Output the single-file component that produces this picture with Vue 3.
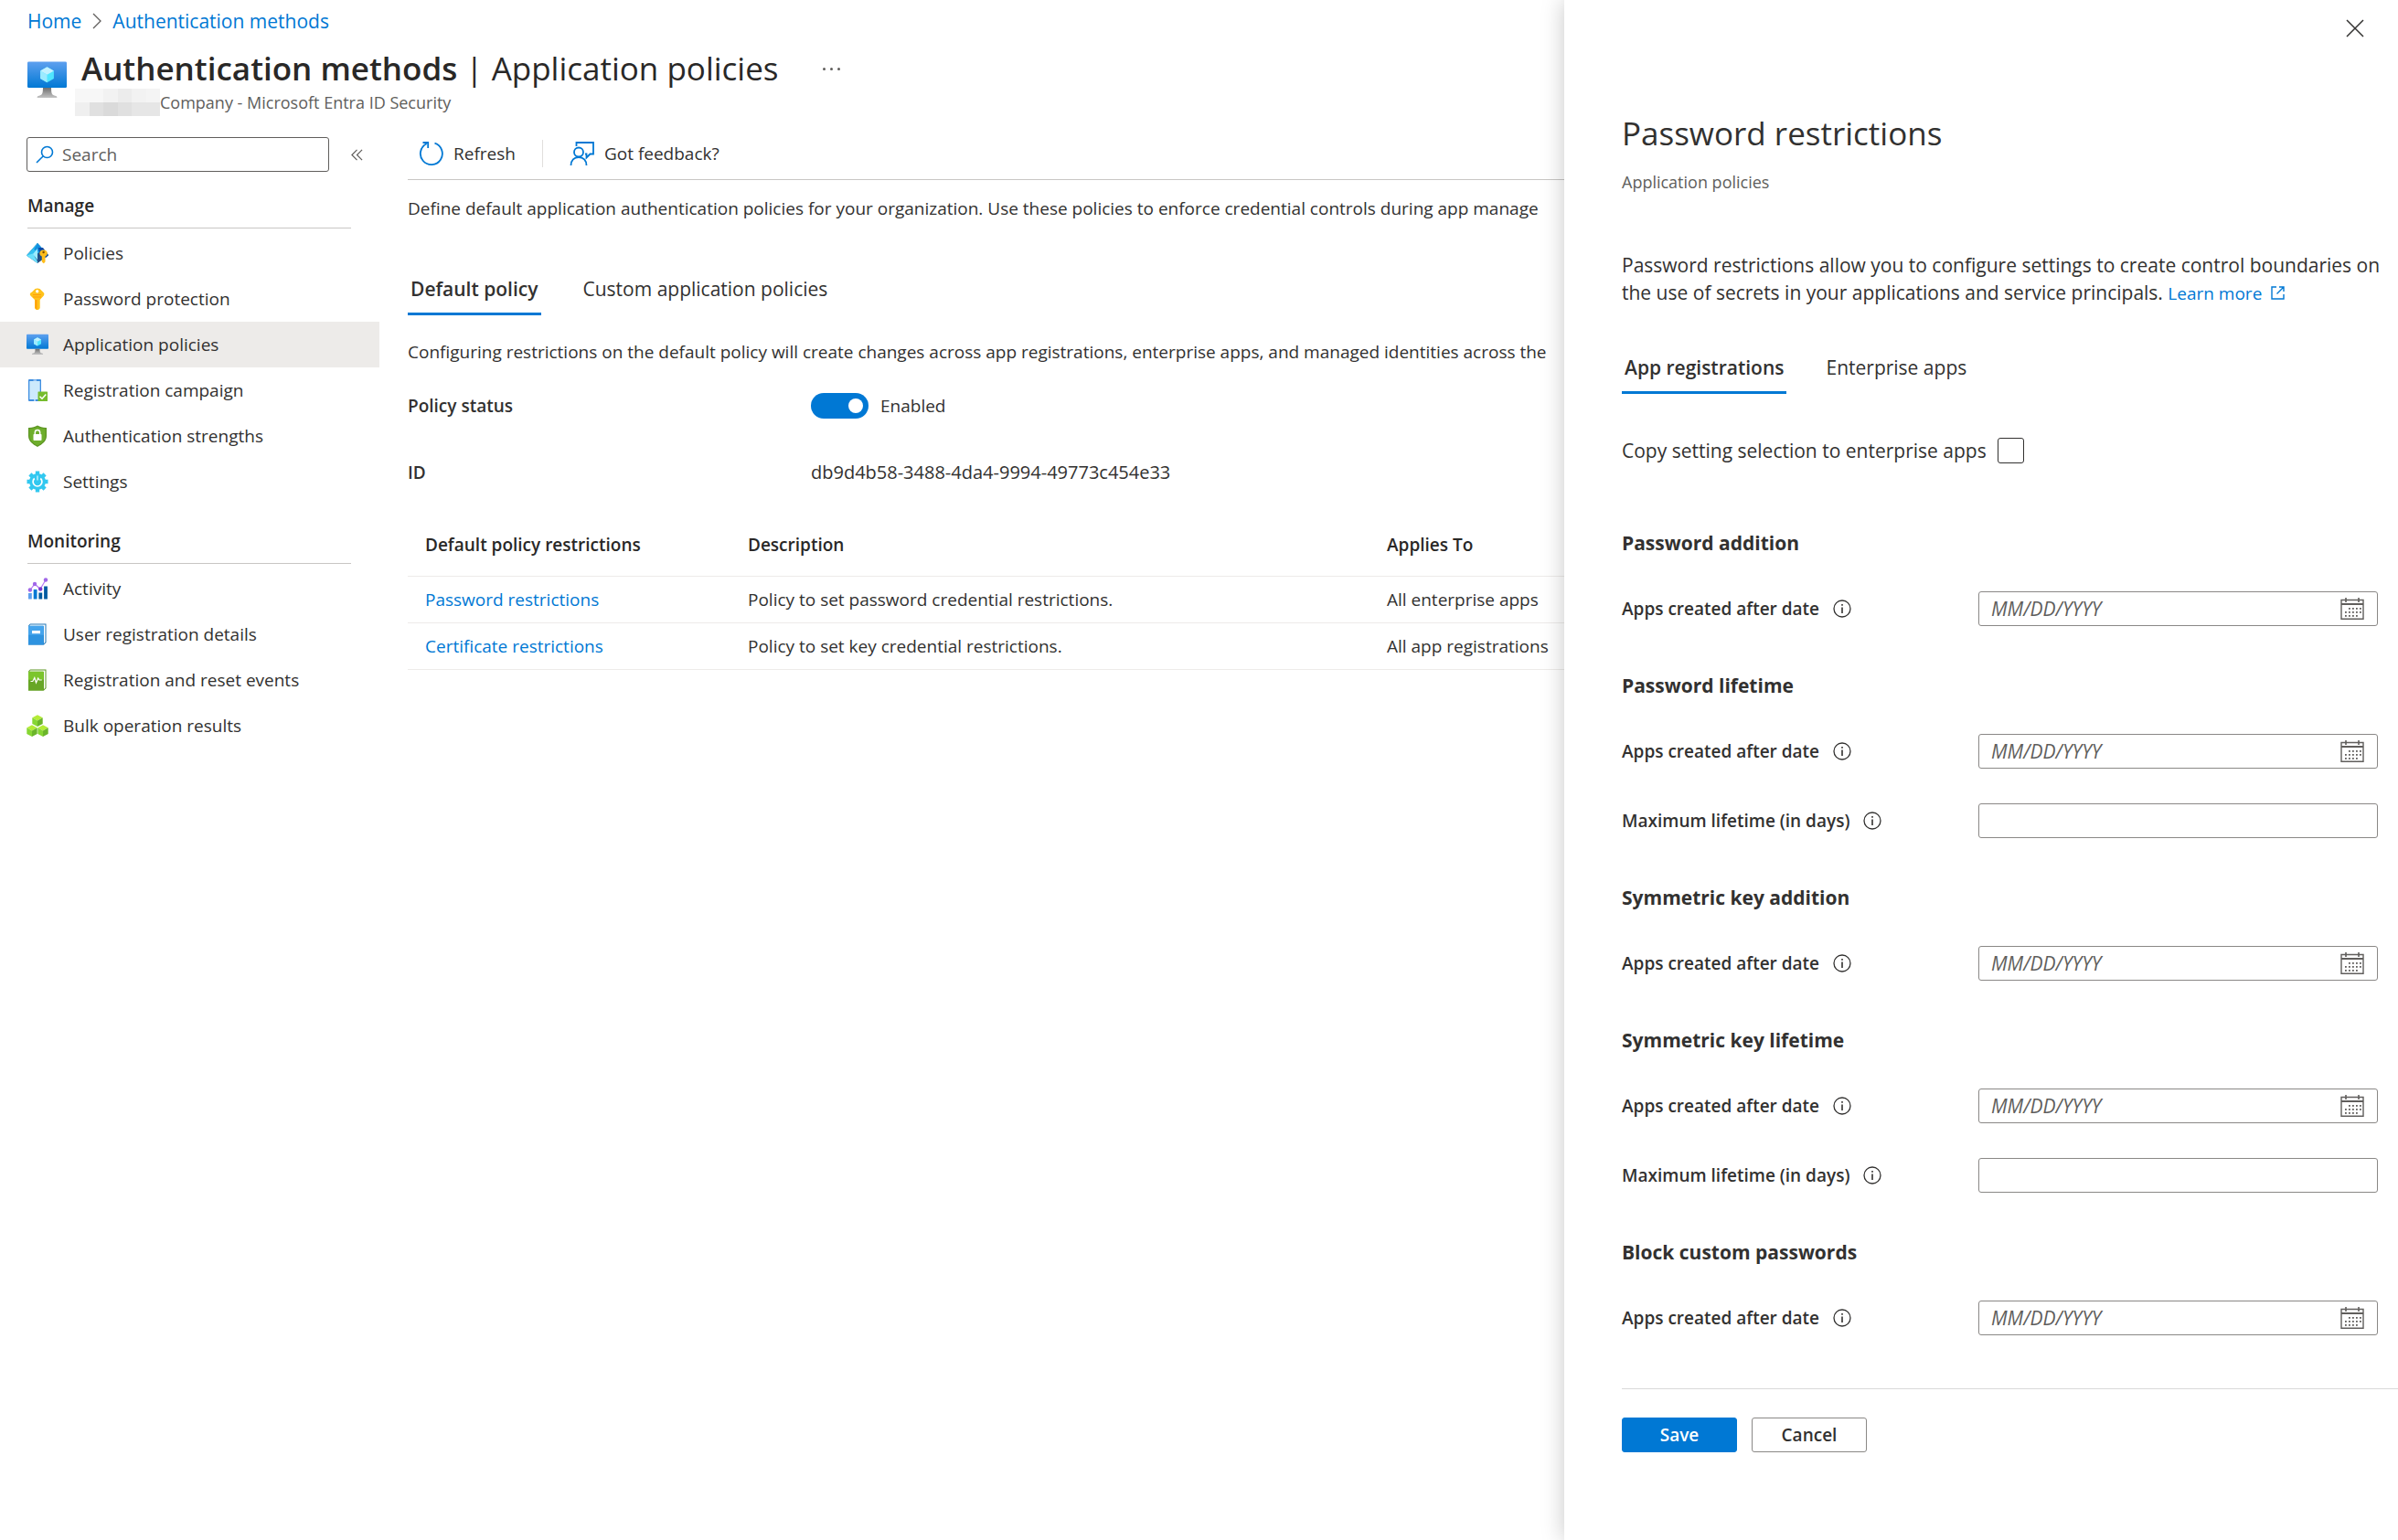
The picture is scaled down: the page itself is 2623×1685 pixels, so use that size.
<script setup>
import { reactive, ref } from 'vue'

const manage = [
  { label: 'Policies', icon: 'policies' },
  { label: 'Password protection', icon: 'key' },
  { label: 'Application policies', icon: 'monitor', active: true },
  { label: 'Registration campaign', icon: 'phone' },
  { label: 'Authentication strengths', icon: 'shield' },
  { label: 'Settings', icon: 'gear' },
]
const monitoring = [
  { label: 'Activity', icon: 'chart' },
  { label: 'User registration details', icon: 'book' },
  { label: 'Registration and reset events', icon: 'events' },
  { label: 'Bulk operation results', icon: 'cubes' },
]
const groups = [
  { title: 'Manage', items: manage },
  { title: 'Monitoring', items: monitoring },
]

const policies = [
  { name: 'Password restrictions', description: 'Policy to set password credential restrictions.', applies: 'All enterprise apps' },
  { name: 'Certificate restrictions', description: 'Policy to set key credential restrictions.', applies: 'All app registrations' },
]

const date = { label: 'Apps created after date', type: 'date' }
const days = { label: 'Maximum lifetime (in days)', type: 'number' }
const sections = [
  { title: 'Password addition', fields: [date] },
  { title: 'Password lifetime', fields: [date, days] },
  { title: 'Symmetric key addition', fields: [date] },
  { title: 'Symmetric key lifetime', fields: [date, days] },
  { title: 'Block custom passwords', fields: [date] },
]

const enabled = ref(true)
const copySettings = ref(false)
const values = reactive({})
const dots = [[10, 12], [14, 12], [18, 12], [22, 12], [6, 16], [10, 16], [14, 16], [18, 16], [22, 16], [6, 20], [10, 20], [14, 20], [18, 20]]
</script>

<template>
  <div class="portal">
    <div class="page">
      <nav class="breadcrumb" aria-label="Breadcrumb">
        <a href="#">Home</a>
        <svg width="12" height="18" viewBox="0 0 12 18" fill="none" stroke="#605e5c" stroke-width="1.3"><path d="M2 1l8 8-8 8" /></svg>
        <a href="#">Authentication methods</a>
      </nav>

      <header class="title-bar">
        <svg class="title-icon" width="43" height="43" viewBox="0 0 18 18">
          <defs>
            <linearGradient id="screen" x1="0" y1="1" x2="0" y2="0"><stop offset="0" stop-color="#0078d4" /><stop offset="1" stop-color="#5ea0ef" /></linearGradient>
            <linearGradient id="stand" x1="0" y1="1" x2="0" y2="0"><stop offset="0" stop-color="#c4c4c4" /><stop offset="1" stop-color="#707070" /></linearGradient>
          </defs>
          <rect y=".6" width="18" height="12" rx=".6" fill="url(#screen)" />
          <path d="M9 3l3.1 1.800v3.600L9 10.200 5.900 8.400V4.800z" fill="#50e6ff" />
          <path d="M9 3l3.100 1.800L9 6.600 5.900 4.800z" fill="#c3f1ff" />
          <path d="M9 6.600v3.600L5.900 8.400V4.800z" fill="#9cebff" />
          <path d="M12.600 16.200c-1.600-.3-1.700-1.500-1.700-3.600H7.100c0 2.100-.1 3.300-1.700 3.600a1 1 0 0 0-1 1h9.200a1 1 0 0 0-1-1z" fill="url(#stand)" />
        </svg>
        <div>
          <div class="title-line">
            <h1><b>Authentication methods</b> | Application policies</h1>
            <button class="more" aria-label="More options"><i></i><i></i><i></i></button>
          </div>
          <p class="tenant">
            <span class="redacted"><i v-for="n in 12" :key="n" :class="'tone-' + n"></i></span>Company - Microsoft Entra ID Security
          </p>
        </div>
      </header>

      <div class="body">
        <aside class="sidebar">
          <div class="search-row">
            <label class="search">
              <svg width="20" height="20" viewBox="0 0 20 20" fill="none" stroke="#0078d4" stroke-width="1.600"><circle cx="12.500" cy="7.500" r="6" /><path d="M8.300 11.800L1 19" /></svg>
              <input type="search" placeholder="Search" aria-label="Search" />
            </label>
            <button class="collapse" aria-label="Collapse menu">
              <svg width="13" height="13" viewBox="0 0 14 14" fill="none" stroke="#605e5c" stroke-width="1.300"><path d="M7 1L1 7l6 6M13 1L7 7l6 6" /></svg>
            </button>
          </div>

          <section v-for="group in groups" :key="group.title" class="nav-group">
            <h2>{{ group.title }}</h2>
            <ul>
              <li v-for="item in group.items" :key="item.label" :class="{ active: item.active }">
                <a href="#">
                  <svg v-if="item.icon === 'policies'" class="nav-icon" viewBox="0 0 24 24">
                    <path d="M12 1L24 14.500 12 23 0 14.500z" fill="#225086" />
                    <path d="M12 1L0 14.500l5 3.500L18 7.700z" fill="#32c0f0" />
                    <path d="M12 1l6 6.700-4 3.300-6-3z" fill="#1490df" />
                    <path d="M0 14.500l7-2 5 8.500v2z" fill="#6be0fb" />
                    <path d="M7 13l5-6v12.500z" fill="#9cebff" />
                    <path d="M13 6h5l6 8-3 3-7-6z" fill="#0b4aa8" />
                    <path d="M18.500 8.500c2.800 0 4.300 1.700 4.300 3.700 0 1.500-1 2.700-2.300 3.300v6l-1.700 1.800-2-1.800v-6c-1.400-.600-2.400-1.800-2.400-3.300 0-2 1.500-3.700 4.100-3.700z" fill="#ffbd1b" />
                    <circle cx="18.600" cy="11" r="1.200" fill="#7a4b00" />
                  </svg>
                  <svg v-else-if="item.icon === 'key'" class="nav-icon" viewBox="0 0 24 24">
                    <path d="M6 4.500L9.500 1q2.500-1 5 0l4.300 4.300q1.400 1.500 0 3.200L14.700 13v9.200L13 24h-2.300L9 22.200V13L4.400 8.500q-1.400-1.600 0-3z" fill="#ffc21a" />
                    <path d="M9.500 13v9l2 2V13z" fill="#ff9d0a" />
                    <path d="M7 7.500h9M7 10h9" stroke="#ff9d0a" stroke-width="1" />
                    <circle cx="11.700" cy="3.800" r="1.700" fill="#fff" />
                  </svg>
                  <svg v-else-if="item.icon === 'monitor'" class="nav-icon" viewBox="0 0 18 18">
                    <rect y=".6" width="18" height="12" rx=".6" fill="url(#screen)" />
                    <path d="M9 3.200l3 1.700v3.500L9 10.100 6 8.400V4.900z" fill="#50e6ff" />
                    <path d="M9 3.200l3 1.700-3 1.700-3-1.700z" fill="#c3f1ff" />
                    <path d="M9 6.600v3.500L6 8.400V4.900z" fill="#9cebff" />
                    <path d="M12.600 16.200c-1.600-.3-1.700-1.500-1.700-3.600H7.100c0 2.100-.1 3.300-1.700 3.600a1 1 0 0 0-1 1h9.200a1 1 0 0 0-1-1z" fill="url(#stand)" />
                  </svg>
                  <svg v-else-if="item.icon === 'phone'" class="nav-icon" viewBox="0 0 24 24">
                    <rect x="2" y="0" width="14" height="24" rx="1" fill="#3f8ee0" />
                    <rect x="3.300" y="2" width="11.400" height="20" fill="#cdeafc" />
                    <rect x="7.500" y=".6" width="3.500" height="1" fill="#d7ecff" />
                    <circle cx="9" cy="23" r=".9" fill="#d7ecff" />
                    <rect x="12.500" y="13.500" width="10.500" height="10.500" rx=".6" fill="#76bc2d" />
                    <path d="M14.500 18.800l2.500 2.400 4.300-4.700" fill="none" stroke="#fff" stroke-width="1.500" />
                  </svg>
                  <svg v-else-if="item.icon === 'shield'" class="nav-icon" viewBox="0 0 24 24">
                    <path d="M12 0.500c3 1.700 5.500 2.600 10 2.500v9c0 5.500-4.500 9-10 12C6.500 21 2 17.500 2 12V3c4.500.1 7-.8 10-2.500z" fill="#5e9624" />
                    <path d="M12 2c2.700 1.500 5 2.100 8.700 2.200V12c0 4.800-3.900 7.800-8.700 10.500C7.200 19.800 3.300 16.800 3.300 12V4.200C7 4.100 9.300 3.500 12 2z" fill="#6eae2c" />
                    <rect x="7.500" y="10" width="9" height="7" rx=".7" fill="#fff" />
                    <path d="M9.300 10.500V8.300a2.700 2.700 0 0 1 5.400 0v2.200" fill="none" stroke="#fff" stroke-width="1.500" />
                  </svg>
                  <svg v-else-if="item.icon === 'gear'" class="nav-icon" viewBox="0 0 24 24">
                    <path d="M12 .5v23M.5 12h23M3.900 3.900l16.200 16.200M20.100 3.900L3.900 20.100" stroke="#32c8f0" stroke-width="4.400" />
                    <circle cx="12" cy="12" r="9" fill="#32c8f0" />
                    <path d="M8.700 8.500a4.900 4.900 0 1 0 6.600 0" fill="none" stroke="#fff" stroke-width="1.700" />
                    <path d="M12 5.500v5" stroke="#b8f0ff" stroke-width="1.500" />
                  </svg>
                  <svg v-else-if="item.icon === 'chart'" class="nav-icon" viewBox="0 0 24 24">
                    <rect x="2" y="17" width="3.800" height="6.500" fill="#5ea0ef" />
                    <rect x="7.700" y="13" width="3.800" height="10.500" fill="#0078d4" />
                    <rect x="13.400" y="16.500" width="3.800" height="7" fill="#005ba1" />
                    <rect x="19.100" y="9.500" width="3.800" height="14" fill="#005ba1" />
                    <path d="M4 13.500L9 7l6 5.500L21 2.500" fill="none" stroke="#b77af4" stroke-width="1.200" />
                    <g fill="#a067e8"><circle cx="3.900" cy="13.500" r="2.200" /><circle cx="9" cy="7" r="2.200" /><circle cx="21" cy="2.500" r="2.200" /></g>
                    <circle cx="15.200" cy="12.500" r="2.200" fill="#7b3ad0" />
                  </svg>
                  <svg v-else-if="item.icon === 'book'" class="nav-icon" viewBox="0 0 24 24">
                    <path d="M4 .5h17.500V21L19 23.500H2V2.500z" fill="#2377b5" />
                    <path d="M4.200 1.500H20.500V20.500l-1.500 1.700V3H3z" fill="#fff" />
                    <rect x="2" y="2.800" width="16.800" height="20.700" rx=".5" fill="#2e93e0" />
                    <rect x="2" y="2.800" width="16.800" height="10" rx=".5" fill="#45a4ec" />
                    <rect x="6" y="8" width="9" height="3.200" fill="#fff" />
                  </svg>
                  <svg v-else-if="item.icon === 'events'" class="nav-icon" viewBox="0 0 24 24">
                    <path d="M4 .5h17.500V21L19 23.500H2V2.500z" fill="#5e9624" />
                    <path d="M4.200 1.500H20.500V20.500l-1.500 1.700V3H3z" fill="#fff" />
                    <rect x="2" y="2.800" width="16.800" height="20.700" rx=".5" fill="#67a626" />
                    <rect x="2" y="2.800" width="16.800" height="9" rx=".5" fill="#7cc52c" />
                    <path d="M4.500 13.500h2.300l2-4 1.700 5.500 2.200-5 1.300 2h2.800" fill="none" stroke="#fff" stroke-width="1.200" />
                  </svg>
                  <svg v-else class="nav-icon" viewBox="0 0 24 24">
                    <g v-for="p in [[12, 0], [6, 11], [18, 11]]" :key="p[0]" :transform="`translate(${p[0]} ${p[1]})`">
                      <path d="M0 0.300l5.700 3L0 6.500l-5.700-3.200z" fill="#b4ec36" />
                      <path d="M-5.700 3.300L0 6.500V13l-5.700-3z" fill="#86d633" />
                      <path d="M5.700 3.300L0 6.500V13l5.700-3z" fill="#6bb52a" />
                    </g>
                  </svg>
                  <span>{{ item.label }}</span>
                </a>
              </li>
            </ul>
          </section>
        </aside>

        <main class="content">
          <div class="toolbar">
            <button>
              <svg width="28" height="28" viewBox="0 0 28 28" fill="none" stroke="#0078d4" stroke-width="1.800"><path d="M17.500 2.700a12 12 0 1 1-8.800.6" /><path d="M4.500 2h5.700v6" /></svg>
              Refresh
            </button>
            <span class="separator"></span>
            <button>
              <svg width="28" height="28" viewBox="0 0 28 28" fill="none" stroke="#0078d4" stroke-width="1.800"><path d="M7.500 6V2h18.500v12.500h-3.500l-4 4V14.500h-1.500" /><circle cx="10" cy="12.500" r="5" /><path d="M1.500 27c0-5.500 3.500-9 8.500-9s8.500 3.500 8.500 9" /></svg>
              Got feedback?
            </button>
          </div>
          <p class="clipped intro">Define default application authentication policies for your organization. Use these policies to enforce credential controls during app manage</p>
          <div class="tabs page-tabs" role="tablist">
            <button role="tab" class="selected" aria-selected="true">Default policy</button>
            <button role="tab" aria-selected="false">Custom application policies</button>
          </div>
          <p class="clipped notice">Configuring restrictions on the default policy will create changes across app registrations, enterprise apps, and managed identities across the</p>
          <div class="property">
            <span class="property-name">Policy status</span>
            <label class="switch"><input v-model="enabled" type="checkbox" role="switch" /><span>Enabled</span></label>
          </div>
          <div class="property">
            <span class="property-name">ID</span>
            <span class="property-id">db9d4b58-3488-4da4-9994-49773c454e33</span>
          </div>
          <table>
            <thead>
              <tr><th class="col-name">Default policy restrictions</th><th class="col-description">Description</th><th>Applies To</th></tr>
            </thead>
            <tbody>
              <tr v-for="policy in policies" :key="policy.name">
                <td><a href="#">{{ policy.name }}</a></td>
                <td>{{ policy.description }}</td>
                <td>{{ policy.applies }}</td>
              </tr>
            </tbody>
          </table>
        </main>
      </div>
    </div>

    <section class="panel" aria-label="Password restrictions">
      <div class="panel-top">
        <button class="close" aria-label="Close">
          <svg width="20" height="20" viewBox="0 0 20 20" stroke="#323130" stroke-width="1.500"><path d="M1 1l18 18M19 1L1 19" /></svg>
        </button>
      </div>
      <h2 class="panel-title">Password restrictions</h2>
      <p class="panel-subtitle">Application policies</p>
      <p class="panel-text">
        Password restrictions allow you to configure settings to create control boundaries on the use of secrets in your applications and service principals.
        <a href="#">Learn more<svg width="15" height="15" viewBox="0 0 15 15" fill="none" stroke="#0078d4" stroke-width="1.400"><path d="M6 1H1v13h13V9M9 1h5v5M14 1L6.500 8.500" /></svg></a>
      </p>
      <div class="tabs panel-tabs" role="tablist">
        <button role="tab" class="selected" aria-selected="true">App registrations</button>
        <button role="tab" aria-selected="false">Enterprise apps</button>
      </div>
      <label class="copy"><span>Copy setting selection to enterprise apps</span><input v-model="copySettings" type="checkbox" /></label>

      <form @submit.prevent>
        <fieldset v-for="(section, s) in sections" :key="section.title">
          <legend>{{ section.title }}</legend>
          <div v-for="(field, f) in section.fields" :key="field.label" class="field">
            <div class="field-label">
              <label :for="`field-${s}-${f}`">{{ field.label }}</label>
              <svg width="20" height="20" viewBox="0 0 20 20" fill="none" stroke="#323130" stroke-width="1.300"><circle cx="10" cy="10" r="9" /><path d="M10 8.500V15M10 5v1.800" stroke-width="1.600" /></svg>
            </div>
            <div class="box">
              <input :id="`field-${s}-${f}`" v-model="values[`${s}-${f}`]" type="text" :placeholder="field.type === 'date' ? 'MM/DD/YYYY' : ''" />
              <button v-if="field.type === 'date'" type="button" aria-label="Choose date">
                <svg width="26" height="24" viewBox="0 0 26 24" fill="none" stroke="#605e5c">
                  <path d="M1 2.500h24v20.800H1z" stroke-width="1.400" />
                  <path d="M1 7h24" stroke-width="2" />
                  <path d="M6 0v5M20 0v5" stroke-width="1.600" />
                  <rect v-for="(d, i) in dots" :key="i" :x="d[0] - 1" :y="d[1] - 1" width="1.800" height="1.800" fill="#605e5c" stroke="none" />
                </svg>
              </button>
            </div>
          </div>
        </fieldset>
        <div class="actions">
          <button type="submit" class="primary">Save</button>
          <button type="button">Cancel</button>
        </div>
      </form>
    </section>
  </div>
</template>

<style>
body {
  margin: 0;
  background: #fff;
}
</style>

<style scoped>
* {
  box-sizing: border-box;
}
.portal {
  display: grid;
  grid-template-columns: minmax(0, 1fr) 912px;
  min-height: 100vh;
  font-family: "Open Sans", "Noto Sans", sans-serif;
  font-size: 19px;
  line-height: 28px;
  color: #323130;
}
h1, h2, p, ul, fieldset {
  margin: 0;
  padding: 0;
}
ul {
  list-style: none;
}
a {
  color: #0078d4;
  text-decoration: none;
}
button {
  border: 0;
  padding: 0;
  background: none;
  color: inherit;
  font: inherit;
  display: flex;
  align-items: center;
}
svg {
  flex: none;
}
.page {
  overflow: hidden;
}
.breadcrumb {
  display: flex;
  align-items: center;
  gap: 11px;
  padding: 9px 0 0 30px;
  font-size: 21px;
}
.title-bar {
  display: flex;
  height: 113px;
  padding: 16px 0 0 30px;
  gap: 16px;
}
.title-icon {
  margin-top: 13px;
}
.title-line {
  display: flex;
  align-items: center;
  gap: 48px;
}
h1 {
  font-size: 35px;
  line-height: 44px;
  font-weight: 400;
  color: #292827;
}
h1 b {
  font-weight: 600;
}
.more {
  gap: 5px;
}
.more i {
  width: 3px;
  height: 3px;
  border-radius: 50%;
  background: #605e5c;
}
.tenant {
  display: flex;
  align-items: center;
  margin-left: -7px;
  font-size: 18px;
  line-height: 24px;
  color: #605e5c;
}
.redacted {
  display: grid;
  grid-template-columns: repeat(6, 1fr);
  width: 93px;
  height: 30px;
  background: #efefef;
}
.tone-1, .tone-2 { background: #f7f7f7; }
.tone-3, .tone-5 { background: #f2f2f2; }
.tone-4 { background: #ececec; }
.tone-6 { background: #f4f4f4; }
.tone-8, .tone-10 { background: #e0e0e0; }
.tone-9 { background: #dadada; }
.tone-11, .tone-12 { background: #e6e6e6; }
.body {
  display: grid;
  grid-template-columns: 415px minmax(0, 1fr);
}
.search-row {
  display: flex;
  align-items: center;
  gap: 24px;
  padding-left: 29px;
}
.search {
  display: flex;
  align-items: center;
  gap: 9px;
  width: 331px;
  height: 38px;
  padding: 0 9px;
  border: 1px solid #605e5c;
  border-radius: 3px;
}
.search input {
  flex: 1;
  min-width: 0;
  border: 0;
  padding: 0;
  outline: 0;
  background: none;
  font: inherit;
  color: inherit;
}
.search input::placeholder {
  color: #605e5c;
  opacity: 1;
}
.nav-group {
  padding-top: 24px;
}
.nav-group + .nav-group {
  padding-top: 27px;
}
.nav-group h2 {
  margin: 0 31px 2px 30px;
  padding-bottom: 11px;
  border-bottom: 1px solid #c8c6c4;
  font-size: 19px;
  font-weight: 600;
  line-height: 26px;
  color: #292827;
}
.nav-group li a {
  display: flex;
  align-items: center;
  gap: 16px;
  height: 50px;
  padding-left: 29px;
  color: #323130;
}
.nav-group li.active {
  background: #edebe9;
}
.nav-icon {
  width: 24px;
  height: 24px;
}
.content {
  padding-left: 31px;
}
.toolbar {
  display: flex;
  align-items: center;
  height: 47px;
  padding: 0 0 10px 12px;
  border-bottom: 1px solid #c8c6c4;
}
.toolbar button {
  gap: 10px;
}
.separator {
  width: 1px;
  height: 30px;
  margin: 0 29px;
  background: #e1dfdd;
}
.clipped {
  overflow: hidden;
  white-space: nowrap;
}
.intro {
  margin-top: 17px;
}
.tabs {
  display: flex;
  font-size: 21px;
}
.page-tabs {
  gap: 43px;
  margin-top: 60px;
}
.tabs button {
  padding: 0 3px 12px;
  border-bottom: 3px solid transparent;
}
.tabs .selected {
  border-color: #0078d4;
  font-weight: 600;
}
.notice {
  margin-top: 26px;
}
.property {
  display: grid;
  grid-template-columns: 441px minmax(0, 1fr);
  margin-top: 31px;
}
.property + .property {
  margin-top: 45px;
}
.property-name {
  font-weight: 600;
}
.property-id {
  font-size: 20px;
}
.switch {
  display: flex;
  align-items: center;
  gap: 13px;
}
.switch input {
  appearance: none;
  display: flex;
  align-items: center;
  width: 63px;
  height: 28px;
  margin: 0;
  padding: 0 6px;
  border-radius: 14px;
  background: #8a8886;
}
.switch input:checked {
  justify-content: flex-end;
  background: #0078d4;
}
.switch input::before {
  content: "";
  width: 16px;
  height: 16px;
  border-radius: 50%;
  background: #fff;
}
table {
  width: 100%;
  min-width: 1265px;
  margin-top: 32px;
  border-collapse: collapse;
  table-layout: fixed;
}
th, td {
  height: 51px;
  padding: 0 0 0 19px;
  border-bottom: 1px solid #edebe9;
  text-align: left;
}
th {
  height: 67px;
  font-weight: 600;
  color: #292827;
}
.col-name {
  width: 353px;
}
.col-description {
  width: 699px;
}
.panel {
  position: relative;
  padding: 0 0 48px 63px;
  background: #fff;
  box-shadow: 0 0 24px rgba(0, 0, 0, 0.22);
  font-size: 21px;
}
.panel-top {
  display: flex;
  justify-content: flex-end;
  height: 122px;
  padding: 21px 37px 0 0;
}
.close {
  align-self: flex-start;
}
.panel-title {
  font-size: 35px;
  line-height: 48px;
  font-weight: 400;
}
.panel-subtitle {
  margin-top: 17px;
  font-size: 18px;
  line-height: 24px;
  color: #605e5c;
}
.panel-text {
  margin: 64px 10px 0 0;
  line-height: 30px;
}
.panel-text a {
  font-size: 19px;
}
.panel-text svg {
  margin-left: 10px;
}
.panel-tabs {
  gap: 40px;
  margin-top: 52px;
}
.copy {
  display: flex;
  align-items: center;
  gap: 12px;
  margin-top: 48px;
}
.copy input {
  appearance: none;
  width: 29px;
  height: 28px;
  margin: 0;
  border: 1px solid #323130;
  border-radius: 3px;
}
form {
  margin-top: 73px;
}
fieldset {
  min-width: 0;
  margin-bottom: 51px;
  border: 0;
}
legend {
  margin-bottom: 39px;
  padding: 0;
  font-weight: 700;
}
.field {
  display: grid;
  grid-template-columns: minmax(0, 1fr) 437px;
  margin-right: 22px;
}
.field + .field {
  margin-top: 38px;
}
.field-label {
  display: flex;
  align-items: center;
  gap: 15px;
  font-size: 19px;
  font-weight: 600;
}
.box {
  display: flex;
  align-items: center;
  height: 38px;
  padding: 0 14px 0 13px;
  border: 1px solid #8a8886;
  border-radius: 3px;
}
.box input {
  flex: 1;
  min-width: 0;
  border: 0;
  padding: 0;
  outline: 0;
  background: none;
  font: inherit;
  color: inherit;
}
.box input::placeholder {
  color: #605e5c;
  font-style: italic;
  opacity: 1;
}
.actions {
  display: flex;
  gap: 16px;
  margin-top: 58px;
  padding-top: 31px;
  border-top: 1px solid #d9d9d9;
}
.actions button {
  justify-content: center;
  width: 126px;
  height: 38px;
  border: 1px solid #8a8886;
  border-radius: 3px;
  font-size: 19px;
  font-weight: 600;
}
.actions .primary {
  border-color: #0078d4;
  background: #0078d4;
  color: #fff;
}
</style>
